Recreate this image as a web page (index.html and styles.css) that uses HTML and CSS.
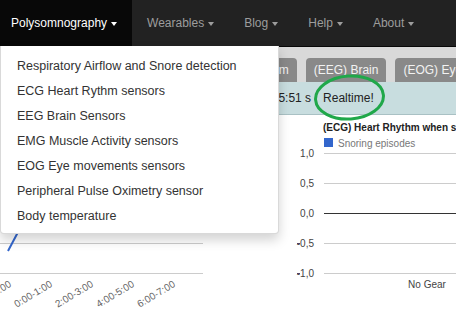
FILE: index.html
```html
<!DOCTYPE html>
<html>

<head>
  <meta charset="UTF-8">
  <title>Polysomnography</title>
  <link rel="stylesheet" href="styles.css">
</head>

<body>
  <nav class="navbar">
    <div class="nav-item active">
      <a class="nav-link" href="#">Polysomnography<span class="caret"></span></a>
      <ul class="dropdown">
        <li><a href="#">Respiratory Airflow and Snore detection</a></li>
        <li><a href="#">ECG Heart Rythm sensors</a></li>
        <li><a href="#">EEG Brain Sensors</a></li>
        <li><a href="#">EMG Muscle Activity sensors</a></li>
        <li><a href="#">EOG Eye movements sensors</a></li>
        <li><a href="#">Peripheral Pulse Oximetry sensor</a></li>
        <li><a href="#">Body temperature</a></li>
      </ul>
    </div>
    <a class="nav-link" href="#">Wearables<span class="caret"></span></a>
    <a class="nav-link" href="#">Blog<span class="caret"></span></a>
    <a class="nav-link" href="#">Help<span class="caret"></span></a>
    <a class="nav-link" href="#">About<span class="caret"></span></a>
  </nav>

  <div class="tabs">
    <a class="tab" href="#">(RESP) Airflow</a>
    <a class="tab" href="#">(ECG) Heart Rhythm</a>
    <a class="tab" href="#">(EEG) Brain</a>
    <a class="tab" href="#">(EOG) Eye movements</a>
  </div>

  <div class="status">
    <span class="elapsed">Sleep time 00:05:51 s</span>
    <span class="realtime">Realtime!
      <svg class="mark" width="73" height="47" viewBox="0 0 73 47">
        <ellipse cx="36.5" cy="23.5" rx="34" ry="21.5" fill="none" stroke="#20a84a" stroke-width="3" transform="rotate(-4 36.5 23.5)"/>
      </svg>
    </span>
  </div>

  <div class="charts">
    <svg class="chart-left" width="280" height="195">
      <g stroke="#ccc" stroke-width="1">
        <line x1="0" y1="38.5" x2="203" y2="38.5"/>
        <line x1="0" y1="68.5" x2="203" y2="68.5"/>
        <line x1="0" y1="98.5" x2="203" y2="98.5"/>
        <line x1="0" y1="128.5" x2="203" y2="128.5"/>
        <line x1="0" y1="158.5" x2="203" y2="158.5"/>
      </g>
      <polyline points="8,136 17,119 30,95" fill="none" stroke="#3366cc" stroke-width="2"/>
      <g class="xlab">
        <text x="12" y="171" text-anchor="end" transform="rotate(-31 12 171)">22:00-23:00</text>
        <text x="53" y="171" text-anchor="end" transform="rotate(-31 53 171)">0:00-1:00</text>
        <text x="94" y="171" text-anchor="end" transform="rotate(-31 94 171)">2:00-3:00</text>
        <text x="135" y="171" text-anchor="end" transform="rotate(-31 135 171)">4:00-5:00</text>
        <text x="176" y="171" text-anchor="end" transform="rotate(-31 176 171)">6:00-7:00</text>
      </g>
    </svg>
    <svg class="chart-right" width="176" height="195">
      <text class="title" x="43" y="16">(ECG) Heart Rhythm when snoring</text>
      <rect x="44" y="23" width="9" height="9" fill="#3366cc"/>
      <text class="legend" x="58" y="31.5">Snoring episodes</text>
      <g stroke="#534060" stroke-width="1">
        <line x1="17" y1="128.5" x2="20" y2="128.5"/>
        <line x1="17" y1="158.5" x2="20" y2="158.5"/>
      </g>
      <g stroke="#ccc" stroke-width="1">
        <line x1="44" y1="38.5" x2="176" y2="38.5"/>
        <line x1="44" y1="68.5" x2="176" y2="68.5"/>
        <line x1="44" y1="128.5" x2="176" y2="128.5"/>
        <line x1="44" y1="158.5" x2="176" y2="158.5"/>
      </g>
      <line x1="44" y1="98.5" x2="176" y2="98.5" stroke="#333" stroke-width="1"/>
      <g class="ylab" text-anchor="end">
        <text x="34" y="42">1,0</text>
        <text x="34" y="72">0,5</text>
        <text x="34" y="102">0,0</text>
        <text x="34" y="132">-0,5</text>
        <text x="34" y="162">-1,0</text>
      </g>
      <text class="axis" x="147" y="173" text-anchor="middle">No Gear</text>
    </svg>
  </div>
</body>

</html>
```

FILE: styles.css
```css
body {
  margin: 0;
  font-family: "Liberation Sans", Arial, sans-serif;
  background: #fff;
  overflow: hidden;
}

a {
  text-decoration: none;
}

.navbar {
  display: flex;
  height: 47px;
  box-sizing: border-box;
  background: #222;
  border-bottom: 1px solid #080808;
}

.nav-item {
  position: relative;
}

.nav-link {
  display: block;
  padding: 0 15px;
  line-height: 46px;
  font-size: 12px;
  color: #9d9d9d;
}

.active .nav-link {
  padding-left: 11px;
  background: #080808;
  color: #fff;
}

.caret {
  display: inline-block;
  margin-left: 4px;
  vertical-align: middle;
  border-top: 4px solid;
  border-left: 3.5px solid transparent;
  border-right: 3.5px solid transparent;
}

.dropdown {
  position: absolute;
  top: 46px;
  left: 0;
  z-index: 10;
  width: 279px;
  box-sizing: border-box;
  margin: 0;
  padding: 8px 0 4px;
  list-style: none;
  background: #fff;
  border: 1px solid rgba(0, 0, 0, .15);
  border-top: 0;
  border-radius: 0 0 4px 4px;
  box-shadow: 0 6px 12px rgba(0, 0, 0, .175);
}

.dropdown a {
  display: block;
  padding-left: 16px;
  line-height: 25px;
  font-size: 12.5px;
  color: #333;
  white-space: nowrap;
}

.tabs {
  display: flex;
  align-items: flex-end;
  height: 35px;
  padding-left: 65px;
  background: #d9d9d9;
  white-space: nowrap;
}

.tab {
  flex: none;
  margin-right: 9px;
  padding: 0 8px;
  line-height: 24px;
  font-size: 12px;
  color: #f2f2f2;
  background: #898989;
  border-radius: 4px 4px 0 0;
}

.status {
  display: flex;
  align-items: center;
  height: 32px;
  padding-left: 195px;
  font-size: 12px;
  color: #222;
  background: #c8dddf;
  border-bottom: 1px solid #a9c1c4;
  white-space: nowrap;
}

.realtime {
  position: relative;
  margin-left: 12px;
}

.mark {
  position: absolute;
  left: -10px;
  top: -17px;
}

.charts {
  display: flex;
}

.chart-left,
.chart-right {
  flex: none;
  display: block;
}

.xlab text,
.ylab text,
.axis {
  font-size: 10px;
  fill: #444;
}

.xlab text {
  fill: #666;
}

.title {
  font-size: 10px;
  font-weight: bold;
  fill: #222;
}

.legend {
  font-size: 10px;
  fill: #777;
}
```
